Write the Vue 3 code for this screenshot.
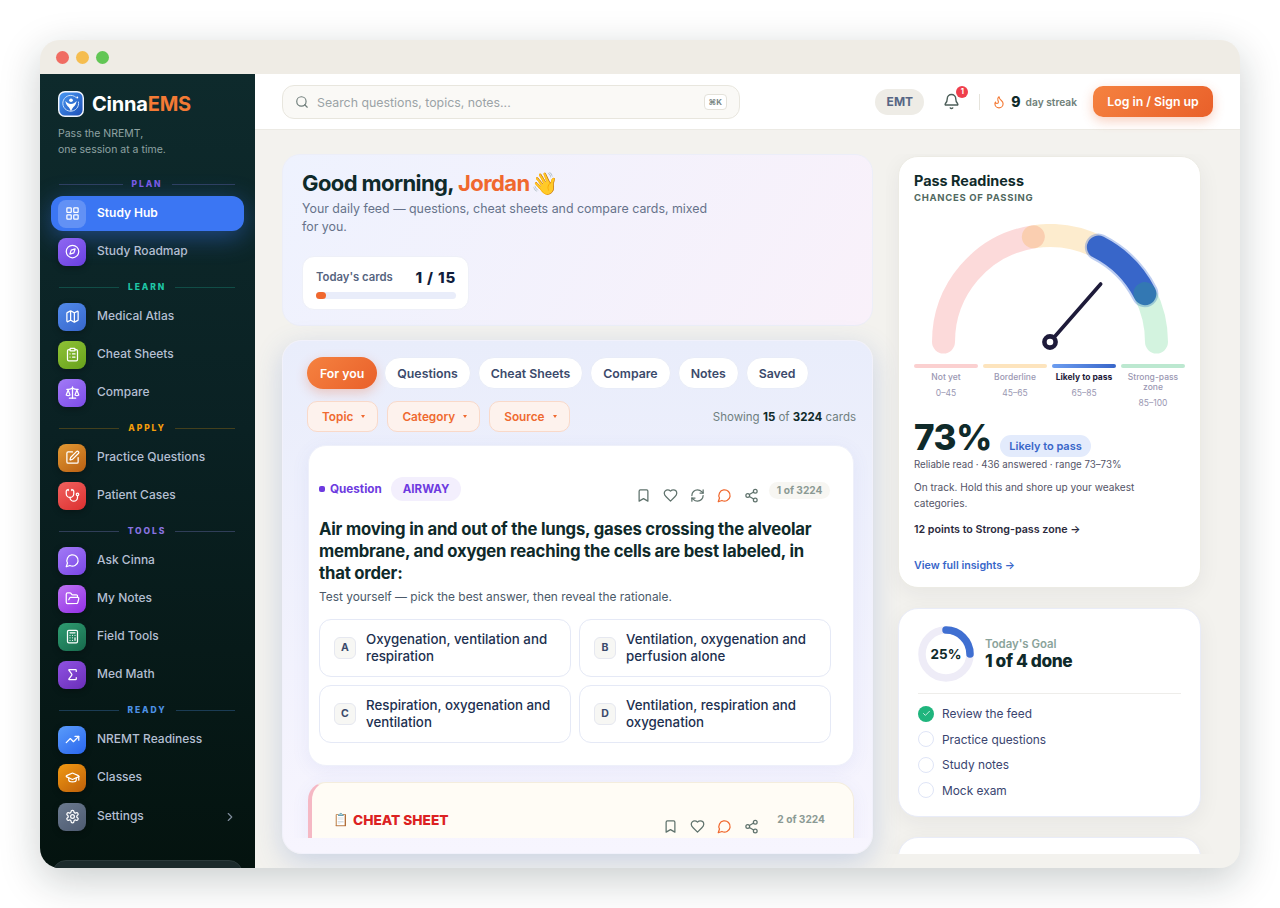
<template>
  <div class="page">
    <div class="window">
      <div class="titlebar">
        <span class="light red"></span>
        <span class="light amber"></span>
        <span class="light green"></span>
      </div>

      <div class="body">
        <aside class="sidebar">
          <div class="brand">
            <svg class="logo" width="26" height="26" viewBox="0 0 27 27">
              <defs>
                <linearGradient id="logoFill" x1="0" y1="0" x2="1" y2="1">
                  <stop offset="0" stop-color="#4a9bf5" />
                  <stop offset="1" stop-color="#1c4db5" />
                </linearGradient>
              </defs>
              <rect x="0.75" y="0.75" width="25.5" height="25.5" rx="6.5" fill="url(#logoFill)" stroke="#f2f6fd" stroke-width="1.5" />
              <path d="M18.6 6.6a8.2 8.2 0 1 0 2.6 4.4" fill="none" stroke="#cfe3fb" stroke-width="1" />
              <circle cx="13.5" cy="9.6" r="1.9" fill="#fff" />
              <path d="M7.6 10.4c2 2.2 3.6 3 5.9 3s3.9-.8 5.9-3c-.6 3.6-2.2 5.4-3.6 6.6-.8.8-1.5 2.4-2.3 4.4-.8-2-1.5-3.6-2.3-4.4-1.4-1.2-3-3-3.6-6.6z" fill="#fff" />
              <circle cx="20" cy="6.8" r="1" fill="#fff" />
            </svg>
            <span class="brand-name">Cinna<em>EMS</em></span>
          </div>
          <p class="tagline">Pass the NREMT,<br />one session at a time.</p>

          <nav class="nav">
            <section v-for="group in navGroups" :key="group.label" class="nav-group">
              <div class="nav-label" :style="{ color: group.color, '--line': group.line }">
                <i></i><span>{{ group.label }}</span><i></i>
              </div>
              <a
                v-for="item in group.items"
                :key="item.name"
                class="nav-row"
                :class="{ active: item.active, last: item.chevron }"
              >
                <span class="tile" :style="{ background: item.active ? undefined : item.bg }">
                  <svg class="ico" width="15" height="15" viewBox="0 0 24 24" v-html="icons[item.icon]"></svg>
                </span>
                <span class="nav-name">{{ item.name }}</span>
                <svg v-if="item.chevron" class="ico chev" width="14" height="14" viewBox="0 0 24 24" v-html="icons.chevron"></svg>
              </a>
            </section>
          </nav>

          <div class="side-foot"></div>
        </aside>

        <div class="main">
          <header class="topbar">
            <div class="search">
              <svg class="ico" width="14" height="14" viewBox="0 0 24 24" v-html="icons.search"></svg>
              <span class="search-text">Search questions, topics, notes...</span>
              <kbd>⌘K</kbd>
            </div>
            <div class="top-right">
              <span class="level">EMT</span>
              <span class="bell">
                <svg class="ico" width="17" height="17" viewBox="0 0 24 24" v-html="icons.bell"></svg>
                <b>1</b>
              </span>
              <span class="vr"></span>
              <span class="streak">
                <svg class="ico flame" width="14" height="14" viewBox="0 0 24 24" v-html="icons.flame"></svg>
                <strong>9</strong>
                <small>day streak</small>
              </span>
              <button class="login">Log in / Sign up</button>
            </div>
          </header>

          <div class="content">
            <div class="col-left">
              <section class="hero">
                <h1>Good morning, <span>Jordan</span> <i class="wave">👋</i></h1>
                <p>Your daily feed — questions, cheat sheets and compare cards, mixed for you.</p>
                <div class="today">
                  <div class="today-head">
                    <span>Today's cards</span>
                    <b>1 / 15</b>
                  </div>
                  <div class="today-track"><div class="today-fill"></div></div>
                </div>
              </section>

              <section class="feed">
                <div class="tabs">
                  <button v-for="(t, i) in tabs" :key="t" class="tab" :class="{ on: i === 0 }">{{ t }}</button>
                </div>
                <div class="filters">
                  <button v-for="f in filters" :key="f" class="filter">{{ f }}<span class="caret"></span></button>
                  <span class="showing">Showing <b>15</b> of <b>3224</b> cards</span>
                </div>

                <div class="scroller">
                  <article class="card">
                    <div class="card-top">
                      <div class="card-kind">
                        <span class="dot"></span>
                        <span class="kind">Question</span>
                        <span class="tag">AIRWAY</span>
                      </div>
                      <div class="card-tools">
                        <svg class="ico" width="15" height="15" viewBox="0 0 24 24" v-html="icons.bookmark"></svg>
                        <svg class="ico" width="15" height="15" viewBox="0 0 24 24" v-html="icons.heart"></svg>
                        <svg class="ico" width="15" height="15" viewBox="0 0 24 24" v-html="icons.refresh"></svg>
                        <svg class="ico hot" width="15" height="15" viewBox="0 0 24 24" v-html="icons.message"></svg>
                        <svg class="ico" width="15" height="15" viewBox="0 0 24 24" v-html="icons.share"></svg>
                      </div>
                      <span class="count">1 of 3224</span>
                    </div>
                    <h2>Air moving in and out of the lungs, gases crossing the alveolar membrane, and oxygen reaching the cells are best labeled, in that order:</h2>
                    <p class="prompt">Test yourself — pick the best answer, then reveal the rationale.</p>
                    <div class="answers">
                      <div v-for="a in answers" :key="a.key" class="answer">
                        <span class="letter">{{ a.key }}</span>
                        <span>{{ a.text }}</span>
                      </div>
                    </div>
                  </article>

                  <article class="card sheet">
                    <div class="sheet-top">
                      <span class="sheet-emoji">📋</span>
                      <span class="sheet-title">CHEAT SHEET</span>
                      <div class="card-tools">
                        <svg class="ico" width="15" height="15" viewBox="0 0 24 24" v-html="icons.bookmark"></svg>
                        <svg class="ico" width="15" height="15" viewBox="0 0 24 24" v-html="icons.heart"></svg>
                        <svg class="ico hot" width="15" height="15" viewBox="0 0 24 24" v-html="icons.message"></svg>
                        <svg class="ico" width="15" height="15" viewBox="0 0 24 24" v-html="icons.share"></svg>
                      </div>
                      <span class="count plain">2 of 3224</span>
                    </div>
                  </article>
                </div>
              </section>
            </div>

            <div class="col-right">
              <section class="panel readiness">
                <h3>Pass Readiness</h3>
                <div class="sub">CHANCES OF PASSING</div>
                <svg class="gauge" width="272" height="134" viewBox="0 0 272 134">
                  <path :d="arc(0, 45)" class="seg" stroke="#ef4444" stroke-opacity=".2" />
                  <path :d="arc(45, 65)" class="seg" stroke="#f59e0b" stroke-opacity=".2" />
                  <path :d="arc(65, 85)" class="seg halo" stroke="#3f6fd8" stroke-opacity=".35" />
                  <path :d="arc(65, 85)" class="seg" stroke="#3866c9" />
                  <path :d="arc(85, 100)" class="seg" stroke="#22c55e" stroke-opacity=".2" />
                  <line x1="136" y1="118" x2="186.7" y2="60" stroke="#1e1b3a" stroke-width="3.6" stroke-linecap="round" />
                  <circle cx="136" cy="118" r="5.6" fill="#fff" stroke="#1e1b3a" stroke-width="4.6" />
                </svg>
                <div class="legend">
                  <div v-for="z in zones" :key="z.label" class="zone" :class="{ cur: z.cur }">
                    <span class="zone-bar" :style="{ background: z.bar }"></span>
                    <span class="zone-name">{{ z.label }}</span>
                    <span class="zone-range">{{ z.range }}</span>
                  </div>
                </div>
                <div class="score">
                  <b>73%</b>
                  <span class="score-tag">Likely to pass</span>
                </div>
                <p class="meta">Reliable read · 436 answered · range 73–73%</p>
                <p class="advice">On track. Hold this and shore up your weakest categories.</p>
                <p class="points">12 points to Strong-pass zone →</p>
                <a class="insights">View full insights →</a>
              </section>

              <section class="panel goal">
                <div class="goal-head">
                  <div class="ring">
                    <svg width="56" height="56" viewBox="0 0 56 56">
                      <circle cx="28" cy="28" r="24" fill="none" stroke="#eeecf7" stroke-width="7.5" />
                      <path d="M28 4a24 24 0 0 1 24 24" fill="none" stroke="#3f6fd1" stroke-width="7.5" stroke-linecap="round" />
                    </svg>
                    <span>25%</span>
                  </div>
                  <div>
                    <div class="goal-label">Today's Goal</div>
                    <div class="goal-value">1 of 4 done</div>
                  </div>
                </div>
                <ul class="goal-list">
                  <li v-for="(g, i) in goals" :key="g">
                    <span class="check" :class="{ done: i === 0 }">
                      <svg v-if="i === 0" class="ico" width="9" height="9" viewBox="0 0 24 24" v-html="icons.check"></svg>
                    </span>
                    {{ g }}
                  </li>
                </ul>
              </section>

              <section class="panel stub"></section>
            </div>
          </div>
        </div>
      </div>
    </div>
  </div>
</template>

<script setup>
const icons = {
  grid: '<rect x="3" y="3" width="7" height="7" rx="1"/><rect x="14" y="3" width="7" height="7" rx="1"/><rect x="14" y="14" width="7" height="7" rx="1"/><rect x="3" y="14" width="7" height="7" rx="1"/>',
  compass: '<circle cx="12" cy="12" r="10"/><polygon points="16.24 7.76 14.12 14.12 7.76 16.24 9.88 9.88"/>',
  map: '<path d="M14.106 5.553a2 2 0 0 0 1.788 0l3.659-1.83A1 1 0 0 1 21 4.619v12.764a1 1 0 0 1-.553.894l-4.553 2.277a2 2 0 0 1-1.788 0l-4.212-2.106a2 2 0 0 0-1.788 0l-3.659 1.83A1 1 0 0 1 3 19.381V6.618a1 1 0 0 1 .553-.894l4.553-2.277a2 2 0 0 1 1.788 0z"/><path d="M15 5.764v15"/><path d="M9 3.236v15"/>',
  clipboard: '<rect x="8" y="2" width="8" height="4" rx="1"/><path d="M16 4h2a2 2 0 0 1 2 2v14a2 2 0 0 1-2 2H6a2 2 0 0 1-2-2V6a2 2 0 0 1 2-2h2"/><path d="M12 11h4"/><path d="M12 16h4"/><path d="M8 11h.01"/><path d="M8 16h.01"/>',
  scale: '<path d="m16 16 3-8 3 8c-.87.65-1.92 1-3 1s-2.13-.35-3-1Z"/><path d="m2 16 3-8 3 8c-.87.65-1.92 1-3 1s-2.13-.35-3-1Z"/><path d="M7 21h10"/><path d="M12 3v18"/><path d="M3 7h2c2 0 5-1 7-2 2 1 5 2 7 2h2"/>',
  pen: '<path d="M12 3H5a2 2 0 0 0-2 2v14a2 2 0 0 0 2 2h14a2 2 0 0 0 2-2v-7"/><path d="M18.375 2.625a1 1 0 0 1 3 3l-9.013 9.014a2 2 0 0 1-.853.505l-2.873.84a.5.5 0 0 1-.62-.62l.84-2.873a2 2 0 0 1 .506-.852z"/>',
  stethoscope: '<path d="M11 2v2"/><path d="M5 2v2"/><path d="M5 3H4a2 2 0 0 0-2 2v4a6 6 0 0 0 12 0V5a2 2 0 0 0-2-2h-1"/><path d="M8 15a6 6 0 0 0 12 0v-3"/><circle cx="20" cy="10" r="2"/>',
  message: '<path d="M7.9 20A9 9 0 1 0 4 16.1L2 22Z"/>',
  folder: '<path d="m6 14 1.5-2.9A2 2 0 0 1 9.24 10H20a2 2 0 0 1 1.94 2.5l-1.54 6a2 2 0 0 1-1.95 1.5H4a2 2 0 0 1-2-2V5a2 2 0 0 1 2-2h3.9a2 2 0 0 1 1.69.9l.81 1.2a2 2 0 0 0 1.67.9H18a2 2 0 0 1 2 2v2"/>',
  calculator: '<rect x="4" y="2" width="16" height="20" rx="2"/><path d="M8 6h8"/><path d="M16 14v4"/><path d="M16 10h.01"/><path d="M12 10h.01"/><path d="M8 10h.01"/><path d="M12 14h.01"/><path d="M8 14h.01"/><path d="M12 18h.01"/><path d="M8 18h.01"/>',
  sigma: '<path d="M18 7V5a1 1 0 0 0-1-1H6.5a.5.5 0 0 0-.4.8l4.5 6a2 2 0 0 1 0 2.4l-4.5 6a.5.5 0 0 0 .4.8H17a1 1 0 0 0 1-1v-2"/>',
  trending: '<path d="M16 7h6v6"/><path d="m22 7-8.5 8.5-5-5L2 17"/>',
  cap: '<path d="M21.42 10.922a1 1 0 0 0-.019-1.838L12.83 5.18a2 2 0 0 0-1.66 0L2.6 9.08a1 1 0 0 0 0 1.832l8.57 3.908a2 2 0 0 0 1.66 0z"/><path d="M22 10v6"/><path d="M6 12.5V16a6 3 0 0 0 12 0v-3.5"/>',
  settings: '<path d="M12.22 2h-.44a2 2 0 0 0-2 2v.18a2 2 0 0 1-1 1.73l-.43.25a2 2 0 0 1-2 0l-.15-.08a2 2 0 0 0-2.73.73l-.22.38a2 2 0 0 0 .73 2.73l.15.1a2 2 0 0 1 1 1.72v.51a2 2 0 0 1-1 1.74l-.15.09a2 2 0 0 0-.73 2.73l.22.38a2 2 0 0 0 2.73.73l.15-.08a2 2 0 0 1 2 0l.43.25a2 2 0 0 1 1 1.73V20a2 2 0 0 0 2 2h.44a2 2 0 0 0 2-2v-.18a2 2 0 0 1 1-1.73l.43-.25a2 2 0 0 1 2 0l.15.08a2 2 0 0 0 2.73-.73l.22-.39a2 2 0 0 0-.73-2.73l-.15-.08a2 2 0 0 1-1-1.74v-.5a2 2 0 0 1 1-1.74l.15-.09a2 2 0 0 0 .73-2.73l-.22-.38a2 2 0 0 0-2.73-.73l-.15.08a2 2 0 0 1-2 0l-.43-.25a2 2 0 0 1-1-1.73V4a2 2 0 0 0-2-2z"/><circle cx="12" cy="12" r="3"/>',
  chevron: '<path d="m9 18 6-6-6-6"/>',
  search: '<circle cx="11" cy="11" r="8"/><path d="m21 21-4.3-4.3"/>',
  bell: '<path d="M10.268 21a2 2 0 0 0 3.464 0"/><path d="M3.262 15.326A1 1 0 0 0 4 17h16a1 1 0 0 0 .74-1.673C19.41 13.956 18 12.499 18 8A6 6 0 0 0 6 8c0 4.499-1.411 5.956-2.738 7.326"/>',
  flame: '<path d="M8.5 14.5A2.5 2.5 0 0 0 11 12c0-1.38-.5-2-1-3-1.072-2.143-.224-4.054 2-6 .5 2.5 2 4.9 4 6.5 2 1.6 3 3.5 3 5.5a7 7 0 1 1-14 0c0-1.153.433-2.294 1-3a2.5 2.5 0 0 0 2.5 2.5z"/>',
  bookmark: '<path d="m19 21-7-4-7 4V5a2 2 0 0 1 2-2h10a2 2 0 0 1 2 2v16z"/>',
  heart: '<path d="M19 14c1.49-1.46 3-3.21 3-5.5A5.5 5.5 0 0 0 16.5 3c-1.76 0-3 .5-4.5 2-1.5-1.5-2.74-2-4.5-2A5.5 5.5 0 0 0 2 8.5c0 2.3 1.5 4.05 3 5.5l7 7Z"/>',
  refresh: '<path d="M3 12a9 9 0 0 1 9-9 9.75 9.75 0 0 1 6.74 2.74L21 8"/><path d="M21 3v5h-5"/><path d="M21 12a9 9 0 0 1-9 9 9.75 9.75 0 0 1-6.74-2.74L3 16"/><path d="M8 16H3v5"/>',
  share: '<circle cx="18" cy="5" r="3"/><circle cx="6" cy="12" r="3"/><circle cx="18" cy="19" r="3"/><path d="M8.59 13.51 15.42 17.49"/><path d="M15.41 6.51 8.59 10.49"/>',
  check: '<path d="M20 6 9 17l-5-5"/>'
}

const navGroups = [
  {
    label: 'PLAN',
    color: '#7a5be6',
    line: 'rgba(122, 120, 220, .3)',
    items: [
      { name: 'Study Hub', icon: 'grid', active: true },
      { name: 'Study Roadmap', icon: 'compass', bg: 'linear-gradient(145deg, #8f68f2, #6a3fe0)' }
    ]
  },
  {
    label: 'LEARN',
    color: '#1fc7a6',
    line: 'rgba(31, 199, 166, .25)',
    items: [
      { name: 'Medical Atlas', icon: 'map', bg: 'linear-gradient(145deg, #528bea, #3766cc)' },
      { name: 'Cheat Sheets', icon: 'clipboard', bg: 'linear-gradient(145deg, #8fc236, #67a11b)' },
      { name: 'Compare', icon: 'scale', bg: 'linear-gradient(145deg, #a27bf6, #7c4be8)' }
    ]
  },
  {
    label: 'APPLY',
    color: '#f59e0b',
    line: 'rgba(245, 158, 11, .25)',
    items: [
      { name: 'Practice Questions', icon: 'pen', bg: 'linear-gradient(145deg, #e29a34, #b95f12)' },
      { name: 'Patient Cases', icon: 'stethoscope', bg: 'linear-gradient(145deg, #f0625f, #dc2f2f)' }
    ]
  },
  {
    label: 'TOOLS',
    color: '#8a74e2',
    line: 'rgba(138, 140, 226, .3)',
    items: [
      { name: 'Ask Cinna', icon: 'message', bg: 'linear-gradient(145deg, #a27bf6, #7a45e6)' },
      { name: 'My Notes', icon: 'folder', bg: 'linear-gradient(145deg, #bc74f2, #932fe6)' },
      { name: 'Field Tools', icon: 'calculator', bg: 'linear-gradient(145deg, #2f9d72, #17694c)' },
      { name: 'Med Math', icon: 'sigma', bg: 'linear-gradient(145deg, #8f52e2, #6a2eb8)' }
    ]
  },
  {
    label: 'READY',
    color: '#4d92e6',
    line: 'rgba(77, 146, 230, .3)',
    items: [
      { name: 'NREMT Readiness', icon: 'trending', bg: 'linear-gradient(145deg, #5a9cfa, #2a66ee)' },
      { name: 'Classes', icon: 'cap', bg: 'linear-gradient(145deg, #f29a12, #bd5f0a)' },
      { name: 'Settings', icon: 'settings', chevron: true, bg: 'linear-gradient(145deg, #6b7a90, #4d5a70)' }
    ]
  }
]

const tabs = ['For you', 'Questions', 'Cheat Sheets', 'Compare', 'Notes', 'Saved']
const filters = ['Topic', 'Category', 'Source']

const answers = [
  { key: 'A', text: 'Oxygenation, ventilation and respiration' },
  { key: 'B', text: 'Ventilation, oxygenation and perfusion alone' },
  { key: 'C', text: 'Respiration, oxygenation and ventilation' },
  { key: 'D', text: 'Ventilation, respiration and oxygenation' }
]

const zones = [
  { label: 'Not yet', range: '0–45', bar: '#fbd0d0' },
  { label: 'Borderline', range: '45–65', bar: '#fde4bd' },
  { label: 'Likely to pass', range: '65–85', bar: 'linear-gradient(90deg, #6c9df0, #3866c9)', cur: true },
  { label: 'Strong-pass zone', range: '85–100', bar: '#bce8d0' }
]

const goals = ['Review the feed', 'Practice questions', 'Study notes', 'Mock exam']

function arc(from, to) {
  const r = 106.5
  const pt = p => {
    const a = Math.PI * (1 - p / 100)
    return `${(136 + r * Math.cos(a)).toFixed(2)} ${(118 - r * Math.sin(a)).toFixed(2)}`
  }
  return `M ${pt(from)} A ${r} ${r} 0 0 1 ${pt(to)}`
}
</script>

<style>
html,
body {
  margin: 0;
  background: #fff;
}
</style>

<style scoped>
* {
  box-sizing: border-box;
}

.page {
  width: 1280px;
  height: 908px;
  padding: 40px;
  font-family: Inter, "Noto Sans", sans-serif;
  color: #0f2a2a;
  overflow: hidden;
}

.window {
  height: 828px;
  border-radius: 20px;
  overflow: hidden;
  display: flex;
  flex-direction: column;
  background: #f3f2ee;
  box-shadow: 0 12px 40px rgba(15, 30, 30, .22);
}

.titlebar {
  height: 34px;
  flex: none;
  background: #efece5;
  display: flex;
  align-items: center;
  gap: 7px;
  padding: 0 0 0 16px;
}

.light {
  width: 13px;
  height: 13px;
  border-radius: 50%;
}

.light.red { background: #f06c62; }
.light.amber { background: #f5bd4f; }
.light.green { background: #62c655; }

.body {
  flex: 1;
  min-height: 0;
  display: flex;
}

.ico {
  fill: none;
  stroke: currentColor;
  stroke-width: 2;
  stroke-linecap: round;
  stroke-linejoin: round;
  flex: none;
}

/* sidebar */
.sidebar {
  width: 215px;
  flex: none;
  overflow: hidden;
  padding: 16px 11px 0;
  background: linear-gradient(180deg, #0e2a2c 0%, #0a2123 45%, #04130f 100%);
}

.brand {
  display: flex;
  align-items: center;
  gap: 8px;
  padding-left: 7px;
  height: 27px;
}

.logo {
  flex: none;
}

.brand-name {
  font-size: 20px;
  font-weight: 700;
  letter-spacing: -.2px;
  color: #fff;
}

.brand-name em {
  font-style: normal;
  color: #f47a35;
}

.tagline {
  margin: 9px 0 0;
  padding-left: 7px;
  font-size: 10.5px;
  line-height: 16px;
  color: #8fa3a3;
}

.nav {
  margin-top: 20px;
}

.nav-group {
  margin-bottom: 12px;
}

.nav-label {
  display: flex;
  align-items: center;
  gap: 9px;
  height: 12px;
  margin: 0 9px 6px 8px;
  font-size: 8.5px;
  font-weight: 800;
  letter-spacing: 1.9px;
}

.nav-label i {
  flex: 1;
  height: 1px;
  background: var(--line);
}

.nav-row {
  display: flex;
  align-items: center;
  gap: 11px;
  height: 35px;
  margin-bottom: 3px;
  padding-left: 7px;
  border-radius: 12px;
  color: #b4bfd2;
  font-size: 12px;
  font-weight: 500;
}

.nav-row:last-child {
  margin-bottom: 0;
}

.nav-row.last {
  margin-top: 4px;
}

.nav-row.active {
  background: #3b76f3;
  color: #fff;
  font-weight: 600;
  box-shadow: 0 6px 26px rgba(59, 118, 243, .45);
}

.tile {
  width: 28px;
  height: 28px;
  flex: none;
  display: flex;
  align-items: center;
  justify-content: center;
  border-radius: 8px;
  color: #fff;
  box-shadow: 0 2px 6px rgba(0, 0, 0, .3);
}

.active .tile {
  background: rgba(255, 255, 255, .2);
  box-shadow: none;
}

.nav-name {
  flex: 1;
  margin-top: -2px;
}

.chev {
  margin-right: 7px;
  color: #7f8c9c;
}

.side-foot {
  height: 60px;
  margin: 26px 1px 0;
  border-radius: 14px;
  background: #1b2a2b;
  border: 1px solid #2a393a;
}

/* top bar */
.main {
  flex: 1;
  min-width: 0;
  display: flex;
  flex-direction: column;
}

.topbar {
  height: 56px;
  flex: none;
  display: flex;
  align-items: center;
  justify-content: space-between;
  padding: 0 27px;
  background: #fff;
  border-bottom: 1px solid #eceae4;
}

.search {
  width: 458px;
  height: 34px;
  margin-top: 1px;
  display: flex;
  align-items: center;
  gap: 8px;
  padding: 0 12px;
  border: 1px solid #e8e6de;
  border-radius: 12px;
  background: #faf9f6;
  color: #6f7d7a;
}

.search-text {
  flex: 1;
  font-size: 12.35px;
  color: #9aa3a6;
}

kbd {
  padding: 2px 4px;
  border: 1px solid #e4e2da;
  border-radius: 4px;
  background: #fff;
  font-family: inherit;
  font-size: 8px;
  font-weight: 700;
  color: #7a8785;
}

.top-right {
  display: flex;
  align-items: center;
}

.level {
  width: 49px;
  height: 26px;
  line-height: 26px;
  text-align: center;
  border-radius: 13px;
  background: #eeece6;
  font-size: 12px;
  font-weight: 700;
  color: #566684;
}

.bell {
  position: relative;
  display: flex;
  margin-left: 19px;
  color: #4d5f5a;
}

.bell b {
  position: absolute;
  top: -7px;
  right: -8px;
  width: 12px;
  height: 12px;
  line-height: 12px;
  text-align: center;
  border-radius: 50%;
  background: #ef3f4d;
  color: #fff;
  font-size: 7.5px;
  font-weight: 700;
}

.vr {
  width: 1px;
  height: 16px;
  margin: 0 12px 0 19px;
  background: #e6e4dc;
}

.streak {
  display: flex;
  align-items: center;
  color: #f47a35;
}

.streak strong {
  margin-left: 5px;
  font-size: 14px;
  font-weight: 800;
  color: #0f2a2a;
}

.streak small {
  margin-left: 5px;
  font-size: 10.2px;
  font-weight: 600;
  color: #6f8079;
}

.login {
  width: 120px;
  height: 31px;
  margin-left: 16px;
  border: 0;
  border-radius: 10px;
  background: linear-gradient(135deg, #f58240, #e9602a);
  color: #fff;
  font-family: inherit;
  font-size: 12.3px;
  font-weight: 600;
  box-shadow: 0 4px 12px rgba(233, 96, 42, .3);
}

/* page content */
.content {
  flex: 1;
  min-height: 0;
  display: flex;
  gap: 13px;
  padding: 24px 27px 14px;
}

.col-left {
  width: 591px;
  flex: none;
  display: flex;
  flex-direction: column;
  gap: 14px;
}

.hero {
  height: 172px;
  flex: none;
  padding: 15px 19px;
  border: 1px solid #eceef8;
  border-radius: 18px;
  background: linear-gradient(120deg, #eef2fe, #f9f1fa);
}

.hero h1 {
  margin: 0;
  font-size: 22px;
  line-height: 27px;
  font-weight: 700;
  letter-spacing: -.6px;
  color: #0f2a2a;
}

.hero h1 span {
  color: #f0682e;
}

.wave {
  font-style: normal;
  margin-left: -3px;
}

.hero p {
  width: 420px;
  margin: 3px 0 0;
  font-size: 12.4px;
  line-height: 18px;
  color: #66728a;
}

.today {
  width: 167px;
  height: 54px;
  margin-top: 20px;
  padding: 12px 12px 0 13px;
  border: 1px solid #eef0f8;
  border-radius: 12px;
  background: #fff;
}

.today-head {
  display: flex;
  align-items: center;
  justify-content: space-between;
  height: 16px;
  font-size: 11.3px;
  font-weight: 600;
  color: #56647f;
}

.today-head b {
  font-size: 15px;
  font-weight: 800;
  letter-spacing: .8px;
  color: #101d3b;
}

.today-track {
  height: 7px;
  margin-top: 7px;
  border-radius: 4px;
  background: #e9edfa;
}

.today-fill {
  width: 10px;
  height: 7px;
  border-radius: 4px;
  background: #f0682e;
}

.feed {
  flex: 1;
  min-height: 0;
  display: flex;
  flex-direction: column;
  padding: 16px 16px 15px 24px;
  border: 1px solid #f1f1fb;
  border-radius: 20px;
  background: linear-gradient(180deg, #e9edfb, #f7f5fe);
  box-shadow: 0 8px 28px rgba(60, 100, 190, .22);
}

.tabs {
  display: flex;
  gap: 7px;
}

.tab {
  height: 32px;
  padding: 0 12px;
  border: 1px solid #e8ecf8;
  border-radius: 16px;
  background: #fff;
  font-family: inherit;
  font-size: 12.3px;
  font-weight: 600;
  color: #3b4a6b;
}

.tab.on {
  border: 0;
  padding: 0 13px;
  background: linear-gradient(135deg, #f58240, #e9602a);
  color: #fff;
  box-shadow: 0 4px 12px rgba(233, 96, 42, .28);
}

.filters {
  display: flex;
  align-items: center;
  gap: 9px;
  margin-top: 12px;
}

.filter {
  display: flex;
  align-items: center;
  height: 31px;
  padding: 0 12px 0 14px;
  border: 1px solid #f9d9c9;
  border-radius: 10px;
  background: #fdf2ed;
  font-family: inherit;
  font-size: 11.8px;
  font-weight: 600;
  color: #ef6a30;
}

.caret {
  margin-left: 8px;
  border-left: 2px solid transparent;
  border-right: 2px solid transparent;
  border-top: 3px solid #ef6a30;
}

.showing {
  margin-left: auto;
  font-size: 11.5px;
  color: #6f7f80;
}

.showing b {
  font-weight: 700;
  color: #0f2a2a;
}

.scroller {
  flex: 1;
  min-height: 0;
  margin: 0 -16px 0 -13px;
  padding: 13px 18px 0 14px;
  overflow: hidden;
}

.card {
  padding: 31px 23px 22px 10px;
  border: 1px solid #eef0fa;
  border-radius: 18px;
  background: #fff;
  box-shadow: 0 4px 18px rgba(90, 100, 200, .08);
}

.card-top {
  display: flex;
  align-items: flex-start;
}

.card-kind {
  display: flex;
  align-items: center;
  height: 24px;
}

.dot {
  width: 6px;
  height: 6px;
  border-radius: 2px;
  background: #6d3ae0;
}

.kind {
  margin-left: 5px;
  font-size: 11.7px;
  font-weight: 700;
  color: #6d3ae0;
}

.tag {
  height: 24px;
  line-height: 24px;
  margin-left: 9px;
  padding: 0 12px;
  border-radius: 12px;
  background: #f3effd;
  font-size: 11.5px;
  font-weight: 700;
  color: #6d3ae0;
}

.card-tools {
  display: flex;
  gap: 12px;
  margin: 11px 0 0 auto;
  color: #5f726c;
}

.hot {
  color: #f0682e;
}

.count {
  height: 17px;
  line-height: 17px;
  margin: 5px 0 0 10px;
  padding: 0 7.5px;
  border-radius: 9px;
  background: #f7f6f2;
  font-size: 10.2px;
  font-weight: 700;
  color: #8b9a94;
}

.card h2 {
  margin: 15px 0 0;
  font-size: 16.7px;
  line-height: 22px;
  font-weight: 700;
  letter-spacing: -.2px;
  color: #0f2a2a;
}

.prompt {
  margin: 5px 0 0;
  font-size: 11.9px;
  line-height: 16px;
  color: #4b5a6a;
}

.answers {
  display: grid;
  grid-template-columns: 1fr 1fr;
  gap: 8px;
  margin: 14px -1px 0 0;
}

.answer {
  display: flex;
  align-items: center;
  gap: 10px;
  height: 58px;
  padding: 0 14px;
  border: 1px solid #e5e9f6;
  border-radius: 12px;
  font-size: 13.3px;
  line-height: 17px;
  font-weight: 500;
  color: #1c3050;
}

.letter {
  width: 22px;
  height: 22px;
  flex: none;
  line-height: 20px;
  text-align: center;
  border: 1px solid #e6e8f0;
  border-radius: 6px;
  background: #f7f7f4;
  font-size: 10.5px;
  font-weight: 700;
  color: #3b4a6b;
}

.sheet {
  height: 120px;
  margin-top: 16px;
  padding: 28px 28px 0 21px;
  border-color: #f4eddd;
  border-left: 4px solid #f5b8c4;
  background: #fffcf5;
}

.sheet-top {
  display: flex;
  align-items: flex-start;
}

.sheet-emoji {
  font-size: 12.5px;
  line-height: 18px;
}

.sheet-title {
  margin-left: 4px;
  font-size: 13.7px;
  line-height: 18px;
  font-weight: 800;
  color: #dc2222;
}

.sheet .card-tools {
  margin-top: 8px;
}

.count.plain {
  margin: 0 0 0 18px;
  padding: 0;
  background: none;
}

/* right column */
.col-right {
  flex: 1;
  min-width: 0;
  display: flex;
  flex-direction: column;
  gap: 20px;
  margin: 0 -12px 0 0;
  padding: 2px 12px 12px 12px;
  overflow: hidden;
}

.panel {
  width: 303px;
  flex: none;
  border: 1px solid #e9ecf8;
  border-radius: 20px;
  background: #fff;
  box-shadow: 0 6px 22px rgba(30, 40, 50, .06);
}

.readiness {
  height: 432px;
  padding: 14px 15px 0;
  border-color: #ecebe4;
}

.readiness h3 {
  margin: 0;
  font-size: 14.4px;
  line-height: 20px;
  font-weight: 700;
  color: #0f2a2a;
}

.sub {
  margin-top: 1px;
  font-size: 9.5px;
  line-height: 12px;
  font-weight: 700;
  letter-spacing: .7px;
  color: #51695f;
}

.gauge {
  display: block;
  margin-top: 20px;
}

.seg {
  fill: none;
  stroke-width: 23;
  stroke-linecap: round;
}

.seg.halo {
  stroke-width: 27;
}

.legend {
  display: grid;
  grid-template-columns: repeat(4, 1fr);
  gap: 5px;
  margin-top: 6px;
}

.zone {
  display: flex;
  flex-direction: column;
  align-items: center;
  text-align: center;
  font-size: 8.5px;
  color: #9a97b2;
}

.zone-bar {
  width: 100%;
  height: 4px;
  border-radius: 2px;
  margin-bottom: 4px;
}

.zone-name {
  line-height: 10px;
  font-weight: 500;
}

.cur .zone-name {
  font-weight: 700;
  color: #1e1b3a;
}

.zone-range {
  margin-top: 6px;
  line-height: 10px;
}

.score {
  display: flex;
  align-items: flex-end;
  gap: 8px;
  margin-top: 8px;
}

.score b {
  font-size: 35px;
  line-height: 42px;
  font-weight: 800;
  letter-spacing: -.4px;
  color: #0f2a2a;
}

.score-tag {
  height: 22px;
  line-height: 22px;
  margin-bottom: 1px;
  padding: 0 9.5px;
  border-radius: 11px;
  background: #e3ebfc;
  font-size: 11px;
  font-weight: 600;
  color: #3866c9;
}

.meta,
.advice,
.points {
  margin: 0;
  font-size: 10.1px;
  line-height: 16px;
  color: #545467;
}

.meta {
  margin-top: -1px;
  font-size: 9.7px;
}

.advice {
  margin-top: 6px;
}

.points {
  margin-top: 11px;
  font-size: 10.7px;
  font-weight: 600;
  color: #2b2a3c;
}

.insights {
  display: block;
  margin-top: 20px;
  font-size: 10.7px;
  line-height: 16px;
  font-weight: 600;
  color: #3866c9;
}

.goal {
  height: 209px;
  padding: 17px 19px 0;
}

.goal-head {
  display: flex;
  align-items: center;
  gap: 11px;
  padding-bottom: 11px;
  border-bottom: 1px solid #eeedea;
}

.ring {
  position: relative;
  width: 56px;
  height: 56px;
  flex: none;
}

.ring svg {
  display: block;
}

.ring span {
  position: absolute;
  inset: 0;
  display: flex;
  align-items: center;
  justify-content: center;
  font-size: 13.5px;
  font-weight: 700;
  color: #0f2a2a;
}

.goal-label {
  font-size: 11.4px;
  line-height: 14px;
  font-weight: 600;
  color: #8aa39a;
}

.goal-value {
  font-size: 17.3px;
  line-height: 20px;
  font-weight: 800;
  letter-spacing: -.4px;
  color: #0f2a2a;
}

.goal-list {
  list-style: none;
  margin: 7px 0 0;
  padding: 0;
}

.goal-list li {
  display: flex;
  align-items: center;
  gap: 8px;
  height: 25.5px;
  font-size: 11.9px;
  color: #3a4570;
}

.check {
  width: 16px;
  height: 16px;
  flex: none;
  display: flex;
  align-items: center;
  justify-content: center;
  border: 1.5px solid #dfe5f7;
  border-radius: 50%;
}

.check.done {
  border: 0;
  background: #1fb57d;
  color: #fff;
}

.stub {
  height: 120px;
}
</style>
